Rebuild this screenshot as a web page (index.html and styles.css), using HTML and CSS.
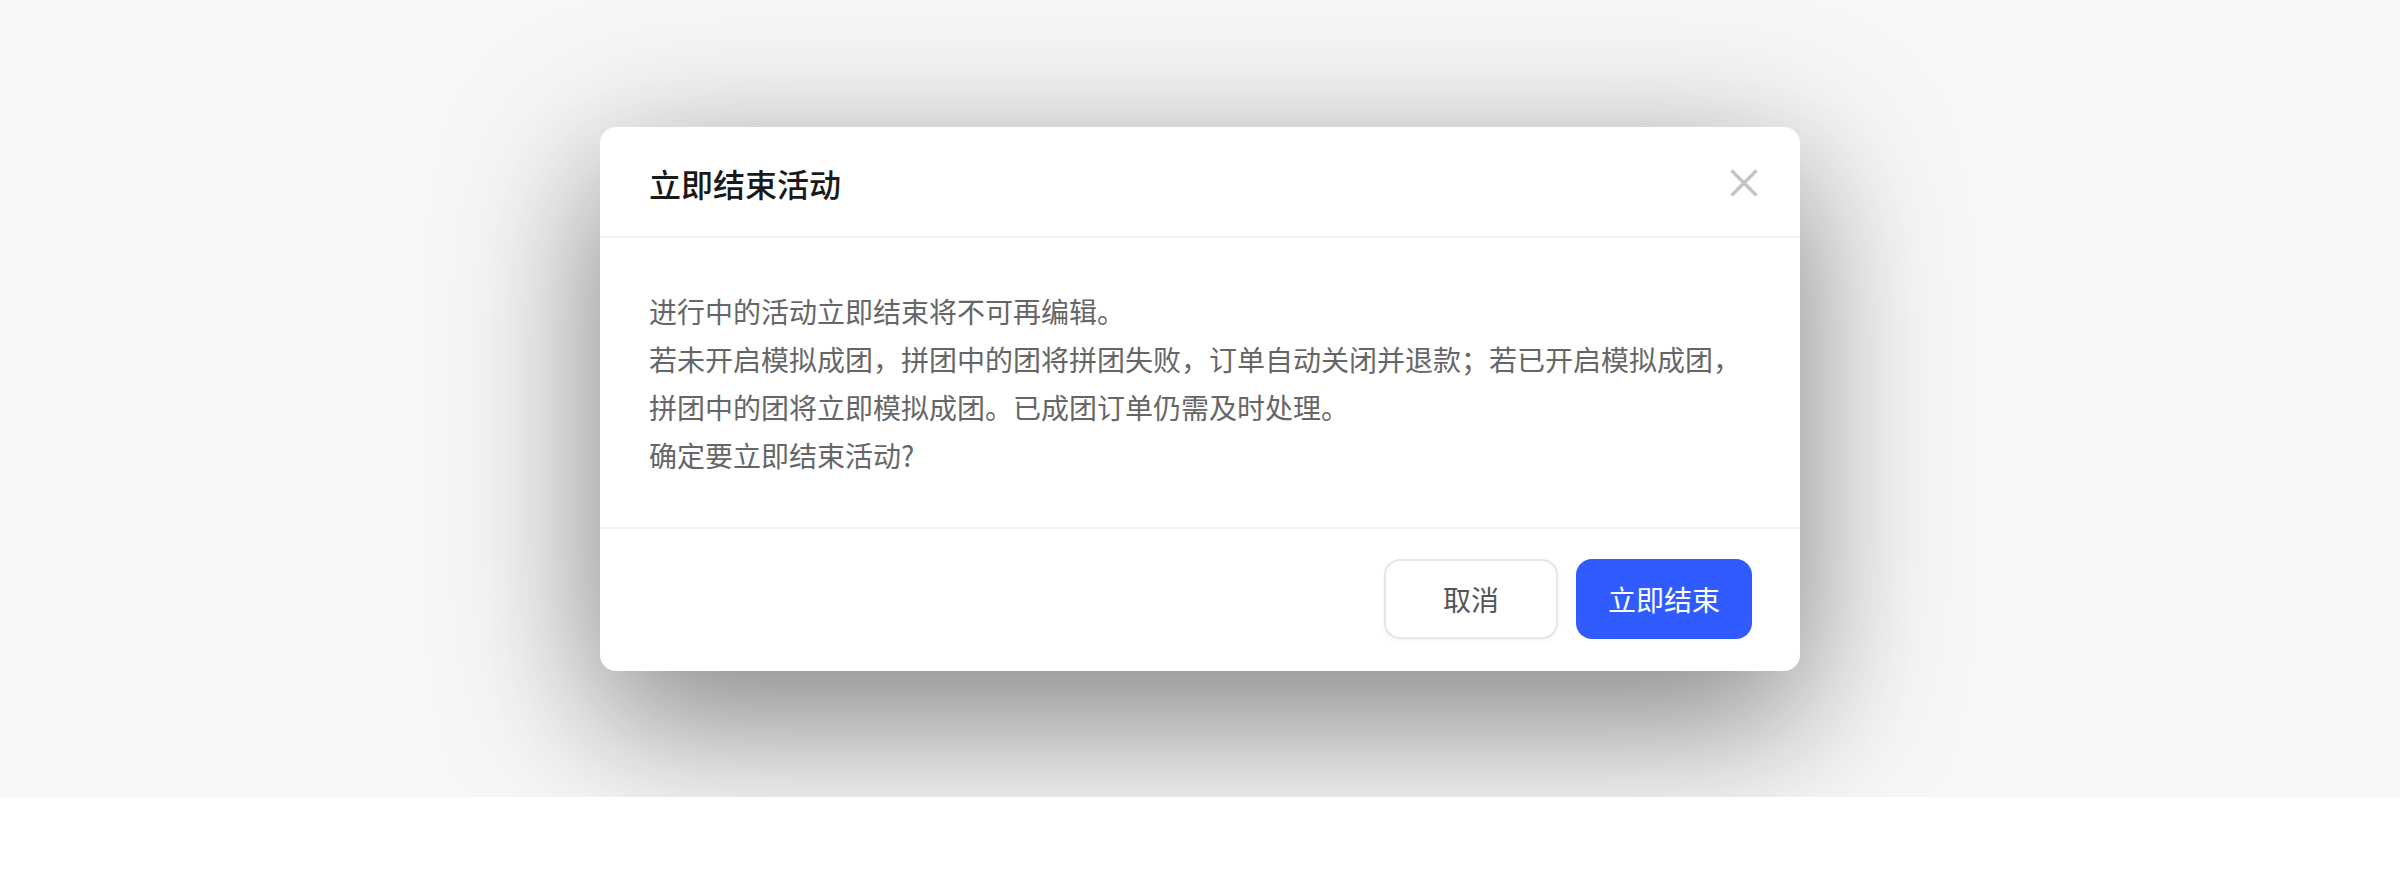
FILE: index.html
```html
<!DOCTYPE html>
<html lang="zh-CN">
<head>
    <meta charset="UTF-8">
    <meta name="viewport" content="width=device-width, initial-scale=1.0">
    <title>立即结束活动</title>
    <link rel="stylesheet" href="styles.css">
</head>
<body>

    <div class="page">
        <div class="dialog">
            <!-- Header -->
            <div class="dialog-header">
                <h2 class="dialog-title">立即结束活动</h2>
                <button class="dialog-close" type="button" aria-label="关闭">
                    <svg width="28" height="28" viewBox="0 0 28 28">
                        <path d="M1.5 1.5 L26.5 26.5 M26.5 1.5 L1.5 26.5" stroke="#c4c4c4" stroke-width="3.5" fill="none"/>
                    </svg>
                </button>
            </div>

            <!-- Body -->
            <div class="dialog-body">
                <p>进行中的活动立即结束将不可再编辑。</p>
                <p>若未开启模拟成团，拼团中的团将拼团失败，订单自动关闭并退款；若已开启模拟成团，拼团中的团将立即模拟成团。已成团订单仍需及时处理。</p>
                <p>确定要立即结束活动?</p>
            </div>

            <!-- Footer -->
            <div class="dialog-footer">
                <button class="btn btn-cancel" type="button">取消</button>
                <button class="btn btn-primary" type="button">立即结束</button>
            </div>
        </div>
    </div>

</body>
</html>
```
FILE: styles.css
```css
body {
    margin: 0;
    padding: 0;
    background-color: #fff;
    font-family: "Noto Sans CJK SC", "Noto Sans", sans-serif;
}

.page {
    height: 797px;
    background-color: #f7f7f7;
    display: flex;
    justify-content: center;
    align-items: center;
}

.dialog {
    width: 1200px;
    background-color: #fff;
    border-radius: 16px;
    box-shadow: 0 40px 160px rgba(0, 0, 0, 0.38), 0 60px 120px rgba(0, 0, 0, 0.14);
}

.dialog-header {
    height: 111px;
    box-sizing: border-box;
    padding: 4px 42px 0 49px;
    display: flex;
    justify-content: space-between;
    align-items: center;
    border-bottom: 2px solid #f0f0f0;
}

.dialog-title {
    margin: 0;
    font-size: 32px;
    line-height: 40px;
    font-weight: 500;
    color: #1a1a1a;
}

.dialog-close {
    width: 28px;
    height: 28px;
    padding: 0;
    border: none;
    background: none;
    cursor: pointer;
    display: flex;
}

.dialog-body {
    padding: 49px 49px 48px;
    font-size: 28px;
    line-height: 48px;
    color: #666;
}

.dialog-body p {
    margin: 0;
}

.dialog-footer {
    border-top: 2px solid #f0f0f0;
    padding: 30px 48px 32px;
    display: flex;
    justify-content: flex-end;
    gap: 18px;
}

.btn {
    height: 80px;
    border-radius: 16px;
    font-family: inherit;
    font-size: 28px;
    cursor: pointer;
    box-sizing: border-box;
}

.btn-cancel {
    width: 174px;
    background-color: #fff;
    border: 2px solid #e6e6e6;
    color: #555;
    box-shadow: 0 2px 4px rgba(0, 0, 0, 0.04);
}

.btn-primary {
    width: 176px;
    background-color: #2f5bff;
    border: none;
    color: #fff;
}
```
